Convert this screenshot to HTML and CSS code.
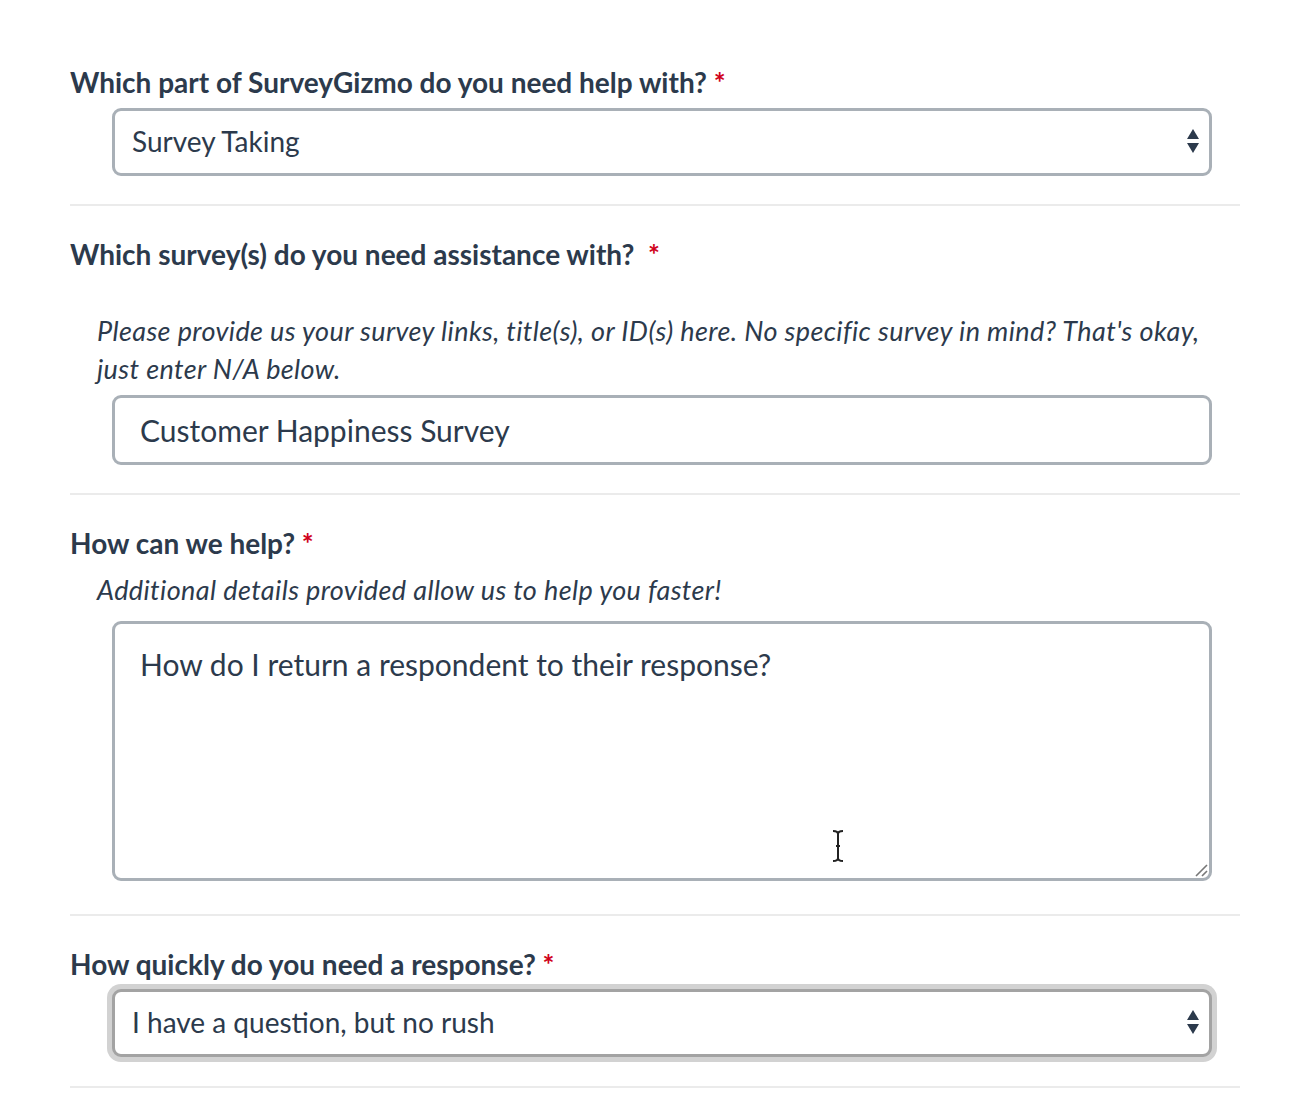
FILE: index.html
```html
<!DOCTYPE html>
<html>
<head>
<meta charset="utf-8">
<link rel="stylesheet" href="styles.css">
</head>
<body>
<div class="form">
  <div class="question q1">
    <div class="label">Which part of SurveyGizmo do you need help with? <span class="req">*</span></div>
    <div class="select">
      <span class="value">Survey Taking</span>
      <svg class="arrows" width="14" height="26" viewBox="0 0 14 26"><path d="M7 0 L13 10 L1 10 Z" fill="#2c3a4c"/><path d="M1 14 L13 14 L7 24 Z" fill="#2c3a4c"/></svg>
    </div>
  </div>
  <div class="question q2">
    <div class="label">Which survey(s) do you need assistance with? &nbsp;<span class="req">*</span></div>
    <div class="hint two">Please provide us your survey links, title(s), or ID(s) here. No specific survey in mind? That's okay, just enter N/A below.</div>
    <div class="input">Customer Happiness Survey</div>
  </div>
  <div class="question q3">
    <div class="label">How can we help? <span class="req">*</span></div>
    <div class="hint one">Additional details provided allow us to help you faster!</div>
    <div class="textarea">
      <span class="value">How do I return a respondent to their response?</span>
      <svg class="ibeam" width="14" height="32" viewBox="0 0 14 32"><path d="M2 1 Q7 1 7 4 Q7 1 12 1 M7 4 L7 28 M5 16 L9 16 M2 31 Q7 31 7 28 Q7 31 12 31" fill="none" stroke="#222" stroke-width="2"/></svg>
      <svg class="grip" width="16" height="16" viewBox="0 0 16 16"><path d="M15 4 L4 15 M15 10 L10 15" stroke="#777" stroke-width="1.6"/></svg>
    </div>
  </div>
  <div class="question q4">
    <div class="label">How quickly do you need a response? <span class="req">*</span></div>
    <div class="select focus">
      <span class="value">I have a question, but no rush</span>
      <svg class="arrows" width="14" height="26" viewBox="0 0 14 26"><path d="M7 0 L13 10 L1 10 Z" fill="#2c3a4c"/><path d="M1 14 L13 14 L7 24 Z" fill="#2c3a4c"/></svg>
    </div>
  </div>
</div>
</body>
</html>
```
FILE: styles.css
```css
* { box-sizing: border-box; }
body {
  margin: 0;
  background: #fff;
  font-family: Lato, "Open Sans", sans-serif;
  color: #2c3a4c;
}
.form {
  width: 1310px;
  padding: 34px 70px 0 70px;
}
.question {
  border-bottom: 2px solid #ebebeb;
  padding: 28px 0 28px 0;
}
.label {
  font-weight: 700;
  font-size: 28px;
  line-height: 36px;
  padding-top: 2px;
}
.req { color: #d0021b; }
.hint {
  font-style: italic;
  font-size: 27px;
  line-height: 38px;
  margin-left: 27px;
  letter-spacing: 0.4px;
}
.q2 .hint { margin-top: 40px; }
.q3 .hint { margin-top: 10px; }
.select, .input, .textarea {
  margin-left: 42px;
  width: 1100px;
  border: 3px solid #a9b0b7;
  border-radius: 9px;
  background: #fff;
}
.select {
  height: 68px;
  margin-top: 8px;
  display: flex;
  align-items: center;
  justify-content: space-between;
  padding: 0 9px 0 17px;
  font-size: 28px;
}
.select .value { padding-bottom: 2px; }
.input {
  height: 70px;
  margin-top: 7px;
  display: flex;
  align-items: center;
  padding: 0 25px;
  font-size: 30px;
}
.textarea {
  position: relative;
  height: 260px;
  margin-top: 12px;
  padding: 22px 25px;
  font-size: 30px;
  line-height: 36px;
}
.q3 { padding-bottom: 33px; }
.ibeam { position: absolute; left: 716px; top: 206px; }
.grip { position: absolute; right: 1px; bottom: 1px; }
.select.focus {
  margin-top: 7px;
  border-color: #a3a3a3;
  box-shadow: 0 0 0 5px #d2d2d2;
}
.q4 { padding-bottom: 29px; }
```
